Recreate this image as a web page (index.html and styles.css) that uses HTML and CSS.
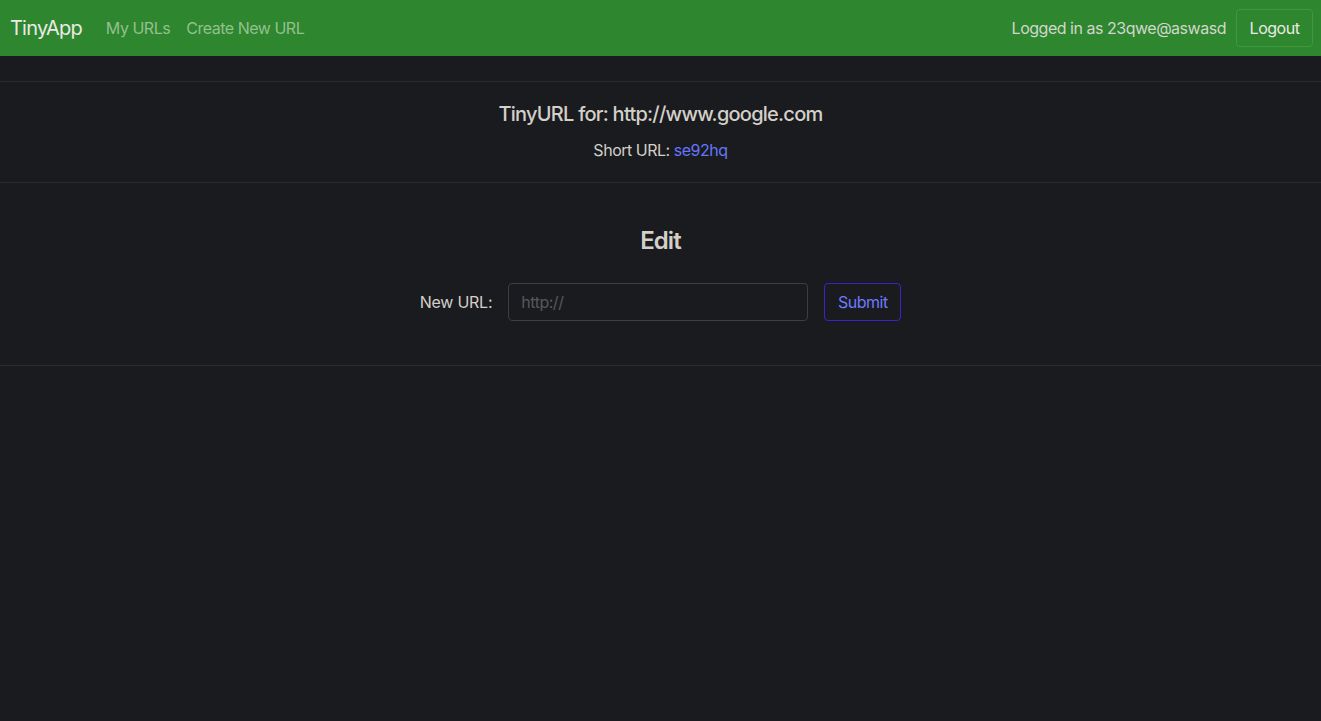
FILE: index.html
```html
<!DOCTYPE html>
<html lang="en">
<head>
<meta charset="utf-8">
<title>TinyApp</title>
<link rel="stylesheet" href="styles.css">
</head>
<body>
<nav class="navbar">
  <div class="nav-left">
    <a class="brand" href="#">TinyApp</a>
    <a class="nav-link" href="#">My URLs</a>
    <a class="nav-link" href="#">Create New URL</a>
  </div>
  <div class="nav-right">
    <span class="nav-text">Logged in as 23qwe@aswasd</span>
    <button class="btn-logout" type="button">Logout</button>
  </div>
</nav>
<main class="card">
  <div class="card-header"></div>
  <div class="card-body">
    <h5 class="card-title">TinyURL for: http://www.google.com</h5>
    <p class="card-text">Short URL: <a class="short-link" href="#">se92hq</a></p>
  </div>
  <div class="card-footer">
    <h4 class="edit-title">Edit</h4>
    <form class="edit-form">
      <label class="form-label" for="newurl">New URL:</label>
      <input class="form-input" id="newurl" type="text" placeholder="http://">
      <button class="btn-submit" type="submit">Submit</button>
    </form>
  </div>
</main>
</body>
</html>
```
FILE: styles.css
```css
html, body {
  margin: 0;
  padding: 0;
}
body {
  background: #1a1b1e;
  color: #d3cfc9;
  font-family: Inter, "Noto Sans", "Liberation Sans", sans-serif;
  font-size: 16px;
  line-height: 1.5;
  letter-spacing: -0.03em;
  min-height: 721px;
}
.navbar {
  height: 56px;
  box-sizing: border-box;
  background: #2e862e;
  display: flex;
  align-items: center;
  justify-content: space-between;
  padding: 0 8px 0 10px;
}
.nav-left, .nav-right {
  display: flex;
  align-items: center;
}
.brand {
  color: #eceae6;
  font-size: 20px;
  letter-spacing: -0.04em;
  text-decoration: none;
  margin-right: 24px;
}
.nav-link {
  color: #93c08f;
  text-decoration: none;
  margin-right: 16px;
}
.nav-text {
  color: #d2d6cd;
  margin-right: 10px;
}
.btn-logout {
  height: 38px;
  width: 77px;
  box-sizing: border-box;
  background: transparent;
  border: 1px solid #3c9a3c;
  border-radius: 4px;
  color: #eceae6;
  font: inherit;
  letter-spacing: inherit;
  padding: 0 12px;
}
.card {
  display: block;
  text-align: center;
}
.card-header {
  height: 24px;
  border-bottom: 1px solid #2a2c2f;
  margin-top: 1px;
}
.card-body {
  padding: 20px;
}
.card-title {
  margin: 0 0 12px;
  font-size: 20px;
  font-weight: 500;
  line-height: 1.2;
  letter-spacing: -0.038em;
}
.card-text {
  margin: 0;
}
.short-link {
  color: #6476fa;
  text-decoration: none;
}
.card-footer {
  border-top: 1px solid #2a2c2f;
  border-bottom: 1px solid #2a2c2f;
  padding: 44px 20px 44px;
}
.edit-title {
  margin: 0 0 27px;
  font-size: 24px;
  font-weight: 600;
  line-height: 1.2;
  letter-spacing: -0.04em;
}
.edit-form {
  display: flex;
  justify-content: center;
  align-items: center;
  gap: 16px;
}
.form-label {
  color: #d3cfc9;
  letter-spacing: -0.015em;
}
.form-input {
  width: 300px;
  height: 38px;
  box-sizing: border-box;
  background: #1a1b1e;
  border: 1px solid #3b3f42;
  border-radius: 4px;
  color: #d3cfc9;
  font: inherit;
  letter-spacing: inherit;
  padding: 6px 12px;
}
.form-input::placeholder {
  color: #55595c;
}
.btn-submit {
  width: 77px;
  height: 38px;
  box-sizing: border-box;
  background: transparent;
  border: 1px solid #3626c8;
  border-radius: 4px;
  color: #6b7bff;
  font: inherit;
  letter-spacing: inherit;
  padding: 0 12px;
}
```
